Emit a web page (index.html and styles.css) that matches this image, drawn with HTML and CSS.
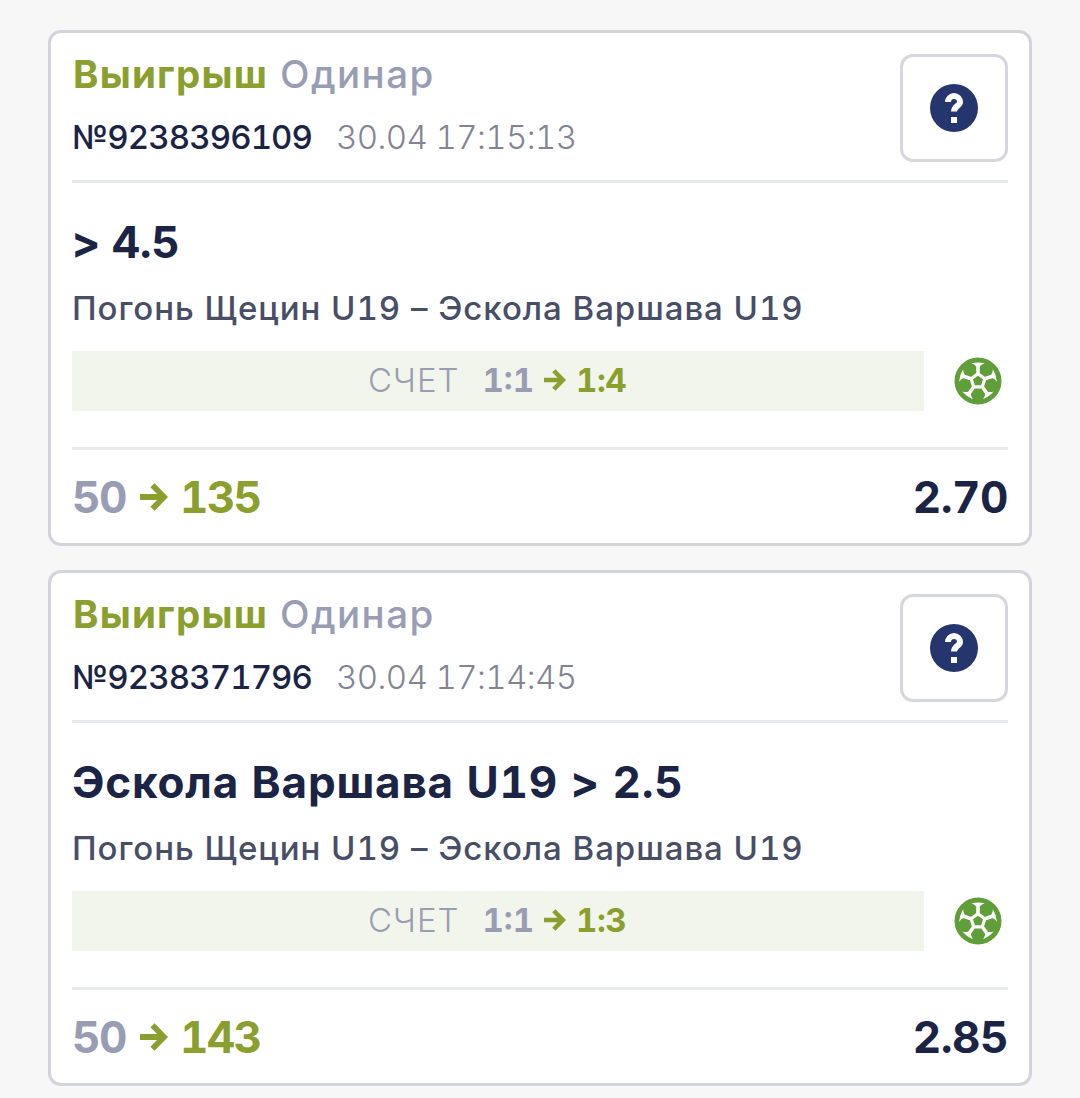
FILE: index.html
```
<!DOCTYPE html>
<html lang="ru">
<head>
    <meta charset="UTF-8">
    <meta name="viewport" content="width=device-width, initial-scale=1.0">
    <title>История ставок</title>
    <link rel="stylesheet" href="styles.css">
</head>
<body>
    <!-- Общие иконки -->
    <svg class="sprite" aria-hidden="true">
        <symbol id="icon-arrow" viewBox="0 0 28 28">
            <path d="M0 14H22M12.5 2.2L24 14L12.5 25.8" fill="none" stroke="currentColor" stroke-width="5.8"/>
        </symbol>
        <symbol id="icon-help" viewBox="0 0 48 48">
            <circle cx="24" cy="24" r="24" fill="#25366f"/>
            <path d="M18 18a6 6 0 0 1 12 0C30 22 24 22 24 27.5" fill="none" stroke="#fff" stroke-width="6"/>
            <path d="M21 33h6v6h-6z" fill="#fff"/>
        </symbol>
        <symbol id="icon-ball" viewBox="0 0 48 48">
            <circle cx="24" cy="24" r="23.5" fill="#5f9e38"/>
            <path d="M24 16.8L30.9 21.8L28.2 29.9H19.8L17.1 21.8Z" fill="none" stroke="#fff" stroke-width="3.2"/>
            <g id="ball-seam">
                <path d="M24 16V8" fill="none" stroke="#fff" stroke-width="3.6"/>
                <path d="M17.4 6.2Q24 4.6 30.6 6.2Q27.2 7.6 25.7 9.4H22.3Q20.8 7.6 17.4 6.2Z" fill="#fff"/>
            </g>
            <use href="#ball-seam" transform="rotate(72 24 24)"/>
            <use href="#ball-seam" transform="rotate(144 24 24)"/>
            <use href="#ball-seam" transform="rotate(216 24 24)"/>
            <use href="#ball-seam" transform="rotate(288 24 24)"/>
        </symbol>
    </svg>

    <main class="bets">
        <article class="bet">
            <header class="bet-header">
                <div class="bet-info">
                    <div class="bet-title"><span class="status">Выигрыш</span><span class="type">Одинар</span></div>
                    <div class="bet-meta"><span class="number">№9238396109</span><span class="date">30.04 17:15:13</span></div>
                </div>
                <button class="help"><svg><use href="#icon-help"/></svg></button>
            </header>
            <section class="bet-body">
                <h2 class="outcome outcome-short">&gt; 4.5</h2>
                <p class="teams">Погонь Щецин U19 – Эскола Варшава U19</p>
                <div class="result">
                    <div class="score">
                        <span class="score-label">СЧЕТ</span>
                        <span class="score-from">1:1</span>
                        <svg class="score-arrow"><use href="#icon-arrow"/></svg>
                        <span class="score-to">1:4</span>
                    </div>
                    <svg class="ball"><use href="#icon-ball"/></svg>
                </div>
            </section>
            <footer class="bet-footer">
                <span class="stake">50</span>
                <svg class="stake-arrow"><use href="#icon-arrow"/></svg>
                <span class="payout">135</span>
                <span class="odds">2.70</span>
            </footer>
        </article>

        <article class="bet">
            <header class="bet-header">
                <div class="bet-info">
                    <div class="bet-title"><span class="status">Выигрыш</span><span class="type">Одинар</span></div>
                    <div class="bet-meta"><span class="number">№9238371796</span><span class="date">30.04 17:14:45</span></div>
                </div>
                <button class="help"><svg><use href="#icon-help"/></svg></button>
            </header>
            <section class="bet-body">
                <h2 class="outcome">Эскола Варшава U19 &gt; 2.5</h2>
                <p class="teams">Погонь Щецин U19 – Эскола Варшава U19</p>
                <div class="result">
                    <div class="score">
                        <span class="score-label">СЧЕТ</span>
                        <span class="score-from">1:1</span>
                        <svg class="score-arrow"><use href="#icon-arrow"/></svg>
                        <span class="score-to">1:3</span>
                    </div>
                    <svg class="ball"><use href="#icon-ball"/></svg>
                </div>
            </section>
            <footer class="bet-footer">
                <span class="stake">50</span>
                <svg class="stake-arrow"><use href="#icon-arrow"/></svg>
                <span class="payout">143</span>
                <span class="odds">2.85</span>
            </footer>
        </article>
    </main>
</body>
</html>
```
FILE: styles.css
```
* {
    margin: 0;
    padding: 0;
    box-sizing: border-box;
}

body {
    font-family: Inter, "Open Sans", sans-serif;
    font-variant-numeric: tabular-nums;
    background: #f7f7f7;
    color: #1b2444;
    white-space: nowrap;
}

.sprite {
    position: absolute;
    width: 0;
    height: 0;
}

.bets {
    display: flex;
    flex-direction: column;
    gap: 24px;
    padding: 30px 48px 12px;
}

.bet {
    height: 516px;
    padding: 21px;
    background: #fff;
    border: 3px solid #d2d3db;
    border-radius: 13px;
}

/* Шапка */
.bet-header {
    display: flex;
    justify-content: space-between;
    height: 129px;
    border-bottom: 3px solid #e8e9ed;
}

.bet-title {
    display: flex;
    gap: 12px;
    padding-left: 1px;
    font-size: 38.5px;
    line-height: 40px;
}

.status {
    color: #8a9f2d;
    font-weight: 700;
    letter-spacing: 1.2px;
}

.type {
    color: #999db3;
    font-weight: 500;
    letter-spacing: 1.4px;
}

.bet-meta {
    display: flex;
    gap: 24px;
    margin-top: 24px;
    font-size: 33px;
    line-height: 38px;
}

.number {
    width: 240px;
    font-weight: 500;
    letter-spacing: -0.9px;
}

.date {
    color: #828492;
    font-weight: 300;
    letter-spacing: -0.6px;
}

.help {
    display: flex;
    align-items: center;
    justify-content: center;
    width: 108px;
    height: 108px;
    background: #fff;
    border: 3px solid #d6d7de;
    border-radius: 13px;
}

.help svg {
    width: 48px;
    height: 48px;
}

/* Событие */
.bet-body {
    height: 267px;
    padding-top: 33px;
    border-bottom: 3px solid #e8e9ed;
}

.outcome {
    font-size: 44px;
    font-weight: 700;
    letter-spacing: 0.8px;
    line-height: 52px;
}

.outcome-short {
    letter-spacing: -0.3px;
}

.teams {
    margin-top: 19px;
    color: #484e66;
    font-size: 33px;
    font-weight: 500;
    letter-spacing: 0.95px;
    line-height: 42px;
}

.result {
    display: flex;
    align-items: center;
    justify-content: space-between;
    margin-top: 22px;
}

.score {
    display: flex;
    align-items: center;
    justify-content: center;
    width: 852px;
    height: 60px;
    padding: 0 2px 2px 0;
    background: #f2f5eb;
    font-size: 33px;
    font-weight: 700;
}

.score-label {
    margin-right: 23px;
    color: #999db3;
    font-weight: 300;
    letter-spacing: 1px;
}

.score-from {
    color: #999db3;
}

.score-arrow {
    width: 22px;
    height: 22px;
    margin: 0 10px;
    color: #8a9f2d;
}

.score-to {
    color: #8a9f2d;
    letter-spacing: -0.5px;
}

.ball {
    width: 48px;
    height: 48px;
    margin-right: 6px;
}

/* Суммы */
.bet-footer {
    display: flex;
    align-items: center;
    height: 94px;
    font-size: 44px;
    font-weight: 700;
}

.stake {
    color: #999db3;
    letter-spacing: -1.5px;
}

.stake-arrow {
    width: 28px;
    height: 28px;
    margin: 0 12px 0 14px;
    color: #8a9f2d;
}

.payout {
    color: #8a9f2d;
    letter-spacing: -1.6px;
}

.odds {
    margin-left: auto;
    letter-spacing: -0.5px;
}
```
